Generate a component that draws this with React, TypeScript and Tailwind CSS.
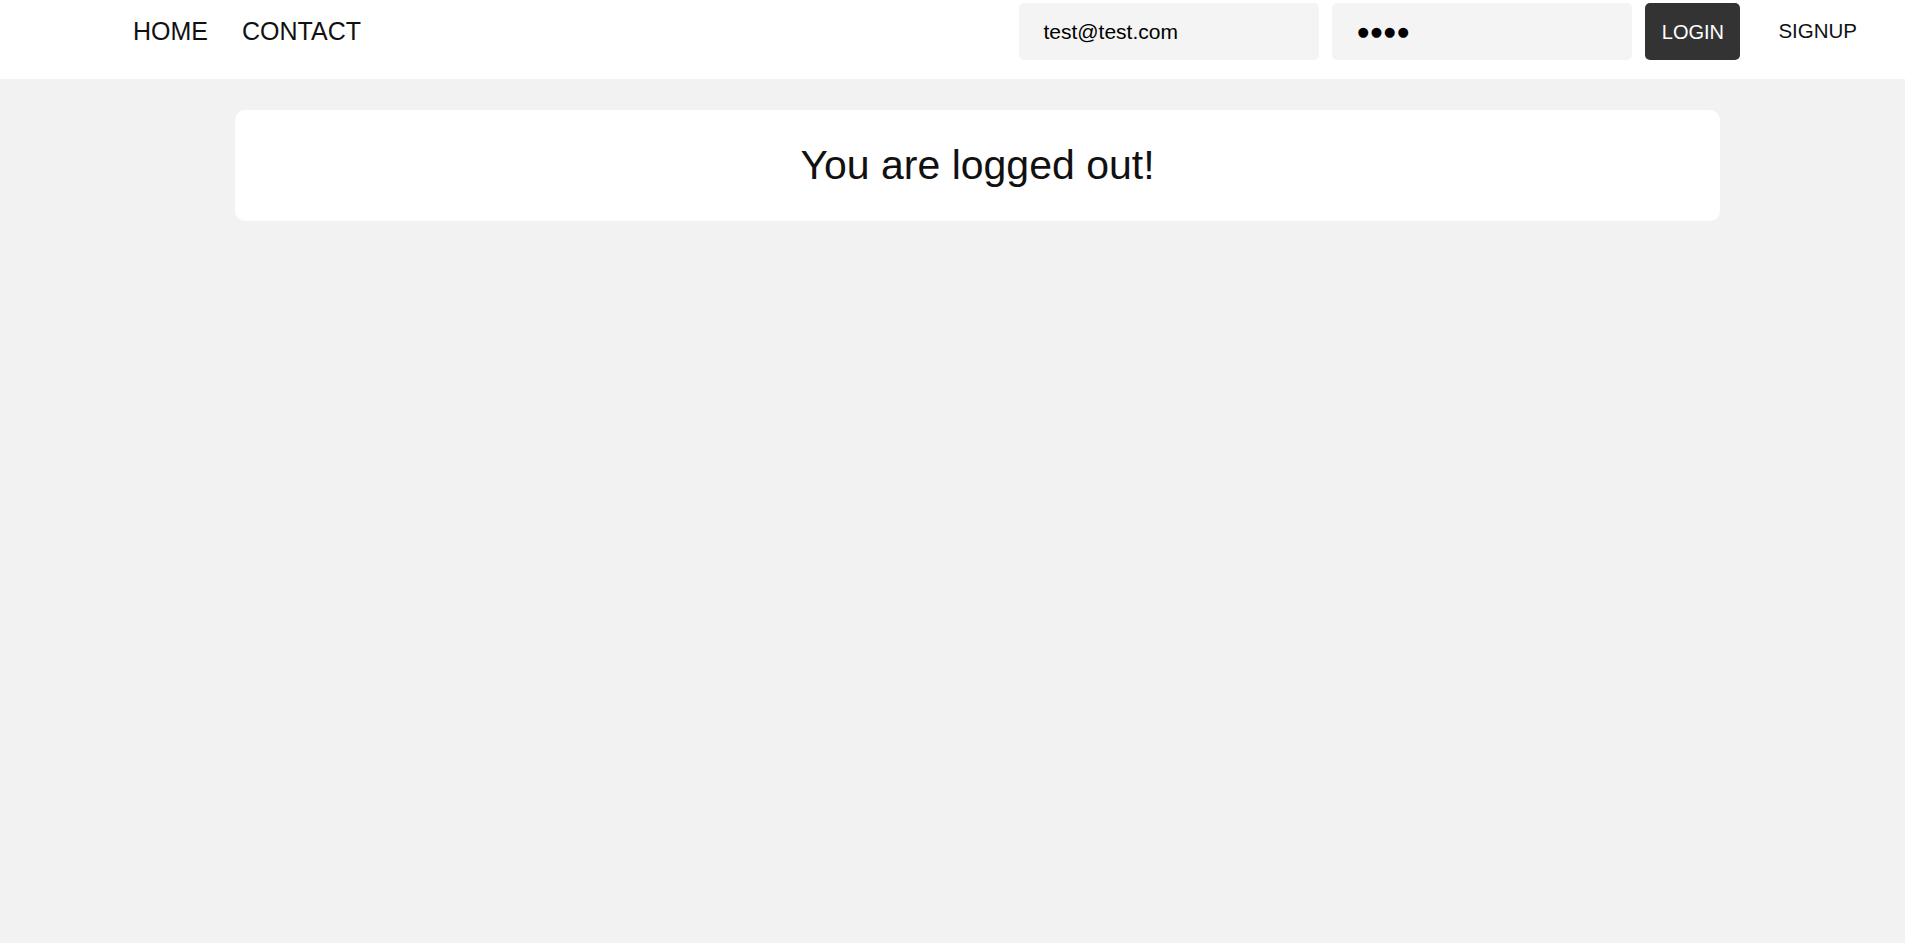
import React from 'react';

const font = { fontFamily: '"Liberation Sans", Arial, sans-serif' };

export default function App() {
  const [email, setEmail] = React.useState('test@test.com');

  return (
    <div className="min-h-[943px] bg-[#f2f2f2] text-[#111]" style={font}>
      {/* top bar */}
      <header className="h-[79px] bg-white pt-[3px]">
        <div className="flex h-[57px] items-center pl-[133px] pr-[48px]">
          <nav className="flex items-center gap-[34px] text-[25px] leading-none">
            <a href="#" className="text-[#111]">HOME</a>
            <a href="#" className="text-[#111]">CONTACT</a>
          </nav>
          <div className="ml-auto flex h-full items-center">
            <input
              type="text"
              value={email}
              onChange={(e) => setEmail(e.target.value)}
              className="h-full w-[300px] rounded-[5px] bg-[#f4f4f4] px-6 text-[21px] text-black outline-none"
            />
            <div
              className="ml-[13px] flex h-full w-[300px] items-center rounded-[5px] bg-[#f4f4f4] pl-[25px] text-[13px] tracking-[2px] text-black"
              style={{ fontFamily: '"DejaVu Sans", sans-serif' }}
            >
              ●●●●
            </div>
            <button
              type="button"
              className="ml-[13px] h-full w-[95px] rounded-[5px] bg-[#333333] text-[20px] text-white"
            >
              LOGIN
            </button>
            <button type="button" className="ml-[38px] text-[20.5px] text-[#111]">
              SIGNUP
            </button>
          </div>
        </div>
      </header>

      {/* message card */}
      <main className="pt-[31px]">
        <div className="ml-[235px] flex h-[111px] w-[1485px] items-center justify-center rounded-[10px] bg-white">
          <h1 className="text-[41px] leading-none text-[#111]">You are logged out!</h1>
        </div>
      </main>
    </div>
  );
}
